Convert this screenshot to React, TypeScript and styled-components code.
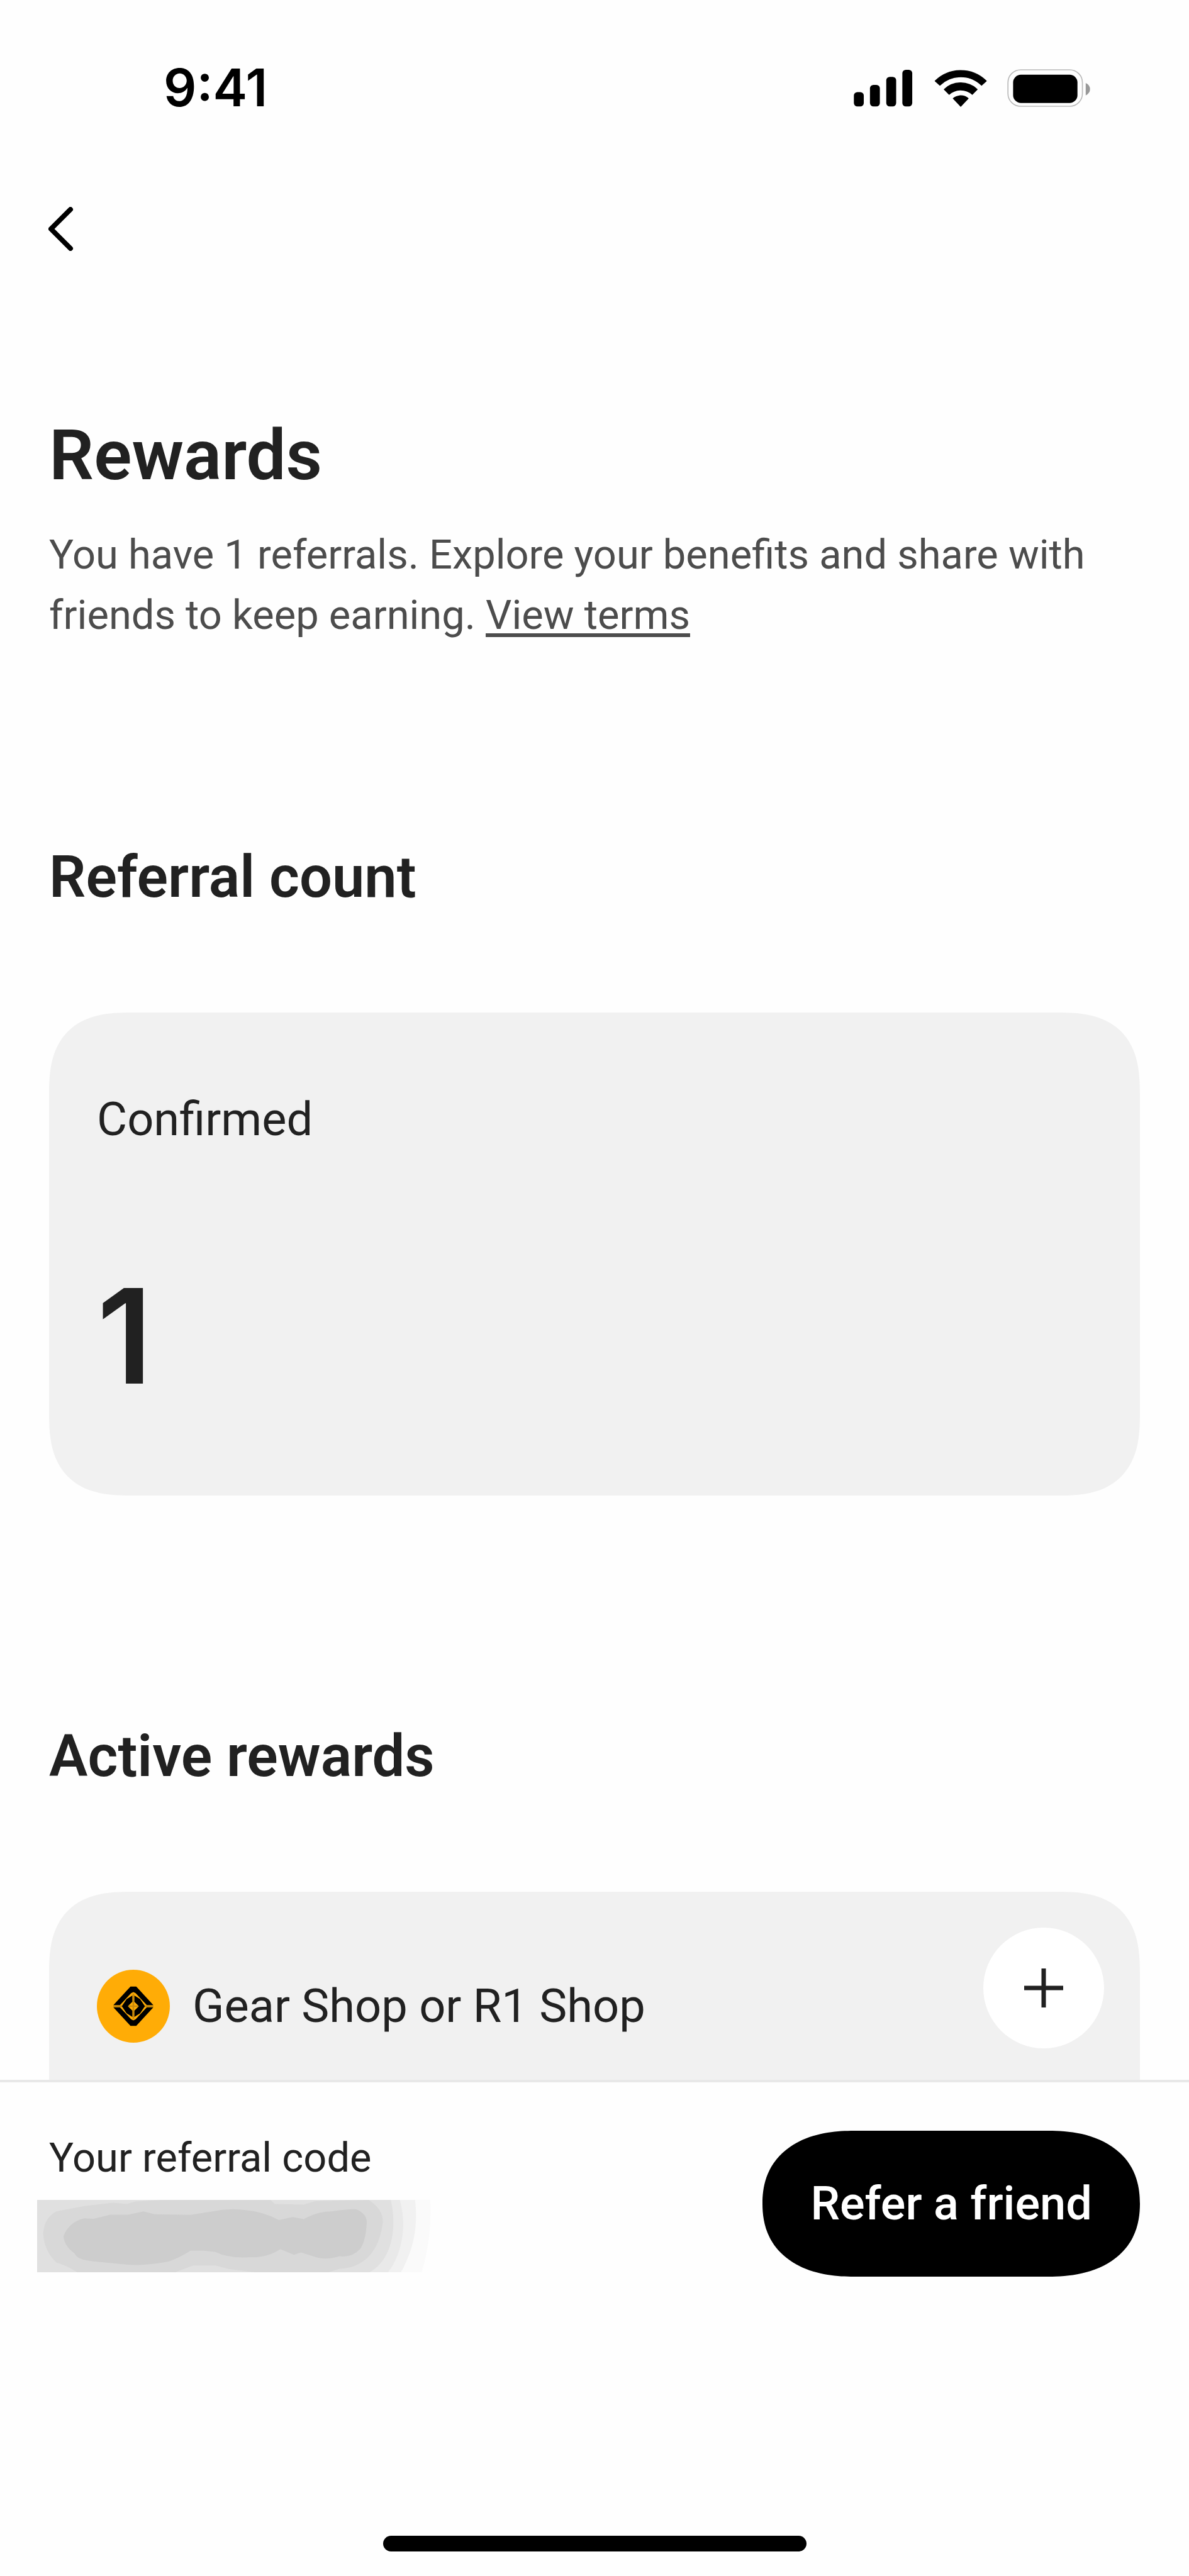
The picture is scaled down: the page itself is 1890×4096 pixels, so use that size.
import React from "react";
import styled, { createGlobalStyle } from "styled-components";

const color = {
  page: "#fefefe",
  card: "#f1f1f1",
  ink: "#212121",
  muted: "#4c4c4c",
  line: "#e8e8e8",
  brand: "#ffac06",
};

const GlobalStyle = createGlobalStyle`
  *, *::before, *::after { box-sizing: border-box; }
  body {
    margin: 0;
    background: ${color.page};
    color: ${color.ink};
    font-family: Roboto, "Liberation Sans", sans-serif;
  }
  h1, h2, p { margin: 0; }
  button { font: inherit; border: 0; padding: 0; cursor: pointer; }
  svg { display: block; flex: none; }
`;

const Screen = styled.div`
  display: flex;
  flex-direction: column;
  height: 100vh;
  overflow: hidden;
`;

const StatusBar = styled.header`
  flex: none;
  display: flex;
  align-items: center;
  justify-content: space-between;
  height: 280px;
  padding: 0 157px 0 260px;
  color: #000;
`;

const Clock = styled.time`
  font-family: Inter, sans-serif;
  font-size: 82px;
  font-weight: 600;
  line-height: 100px;
`;

const NavBar = styled.nav`
  flex: none;
  display: flex;
  align-items: center;
  height: 168px;
  padding: 0 77px;
`;

const BackButton = styled.button`
  background: none;
`;

const Content = styled.main`
  flex: 1 1 0;
  min-height: 0;
  overflow: hidden;
  padding: 216px 78px 0;
`;

const PageTitle = styled.h1`
  font-size: 112px;
  font-weight: 600;
  line-height: 120px;
`;

const Intro = styled.p`
  margin-top: 50px;
  color: ${color.muted};
  font-size: 65px;
  line-height: 96px;
`;

const TermsLink = styled.a`
  color: inherit;
  text-decoration: underline;
  text-decoration-thickness: 6px;
  text-underline-offset: 7px;
  text-decoration-skip-ink: none;
`;

const Section = styled.section<{ $space: number }>`
  margin-top: ${(p) => p.$space}px;
`;

const SectionTitle = styled.h2`
  margin-bottom: 160px;
  font-size: 92px;
  font-weight: 600;
  line-height: 110px;
`;

const Card = styled.div`
  background: ${color.card};
  border-radius: 100px;
  @supports (corner-shape: squircle) {
    border-radius: 130px;
    corner-shape: superellipse(1.4);
  }
`;

const CountCard = styled(Card)`
  display: flex;
  flex-direction: column;
  gap: 172px;
  padding: 126px 76px;
`;

const RewardCard = styled(Card)`
  display: flex;
  align-items: flex-start;
  justify-content: space-between;
  min-height: 780px;
  padding: 57px 57px 57px 76px;
`;

const RewardHead = styled.div`
  display: flex;
  align-items: center;
  gap: 36px;
  padding-top: 67px;
`;

const Label = styled.p`
  font-size: 74px;
  line-height: 88px;
`;

const Count = styled.p`
  font-family: Inter, sans-serif;
  font-size: 209px;
  font-weight: 600;
  line-height: 256px;
`;

const ExpandButton = styled.button`
  display: grid;
  place-items: center;
  flex: none;
  width: 192px;
  height: 192px;
  border-radius: 50%;
  background: #fff;
`;

const BottomBar = styled.footer`
  flex: none;
  border-top: 4px solid ${color.line};
  padding: 77px 78px 39px;
  background: ${color.page};
`;

const ReferRow = styled.div`
  display: flex;
  align-items: flex-start;
  justify-content: space-between;
`;

const CodeBlock = styled.div`
  display: flex;
  flex-direction: column;
  gap: 24px;
`;

const CodeLabel = styled.p`
  font-size: 65px;
  line-height: 86px;
`;

const HiddenCode = styled.svg`
  margin-left: -19px;
`;

const ReferButton = styled.button`
  height: 232px;
  padding: 0 76px;
  border-radius: 130px / 116px;
  background: #000;
  color: #fff;
  font-size: 74px;
  font-weight: 500;
  line-height: 88px;
  @supports (corner-shape: squircle) {
    border-radius: 145px / 116px;
    corner-shape: superellipse(1.2);
  }
`;

const HomeIndicator = styled.div`
  width: 673px;
  height: 25px;
  margin: 412px auto 0;
  border-radius: 13px;
  background: #000;
`;

function StatusIcons() {
  return (
    <svg width="376" height="60" viewBox="57 63 1145 183" role="img" aria-label="Signal, Wi-Fi and battery">
      <rect x="57" y="174" width="48" height="70" rx="17" />
      <rect x="135" y="139" width="48" height="105" rx="17" />
      <rect x="214" y="100" width="48" height="144" rx="17" />
      <rect x="292" y="66" width="48" height="178" rx="17" />
      <g stroke="#000" strokeWidth="4" strokeLinejoin="round">
        <path d="M451 120A177 177 0 0 1 699 120L676 141A145 145 0 0 0 474 141Z" />
        <path d="M495 161A117 117 0 0 1 655 161L631 185A84 84 0 0 0 519 185Z" />
        <path d="M539 205A56 56 0 0 1 611 205L575 243Z" />
      </g>
      <rect x="804" y="66" width="361" height="177" rx="62" fill="none" stroke="#b9b9b9" strokeWidth="5" />
      <rect x="829" y="90" width="312" height="137" rx="38" />
      <path d="M1181 130Q1202 140 1202 160Q1202 180 1181 190Z" fill="#999" />
    </svg>
  );
}

function BrandBadge() {
  return (
    <svg width="116" height="116" viewBox="48 69 354 354" aria-hidden="true">
      <circle cx="225" cy="246" r="177" fill={color.brand} />
      <path d="M128 246H322M225 185V308" stroke="#c98a0c" strokeWidth="8" />
      <path d="M128 241L211 151H239L322 241H290L236 183L225 177L214 183L160 241Z" />
      <path d="M128 251L211 341H239L322 251H290L236 309L225 315L214 309L160 251Z" />
      <path d="M169 246L192 212L220 194V225L198 246L220 267V298L192 280Z" />
      <path d="M281 246L258 212L230 194V225L252 246L230 267V298L258 280Z" />
    </svg>
  );
}

function RedactedCode() {
  return (
    <HiddenCode width="628" height="115" viewBox="45 102 1430 353" preserveAspectRatio="none" role="img" aria-label="Referral code hidden">
      <path fill="#fafafa" d="M45 102H1468Q1475 280 1437 455H45Z" />
      <path fill="#f1f1f1" d="M45 102H1413C1425 240 1405 350 1362 455H45Z" />
      <path fill="#e9e9e9" d="M45 102H1358C1385 230 1365 370 1315 455H45Z" />
      <path fill="#e0e0e0" d="M45 102H1325C1350 250 1325 400 1248 455H45Z" />
      <path fill="#d8d8d8" d="M400 110L500 102H890L905 122L1010 125L1050 108L1245 102Q1300 150 1296 215Q1285 330 1240 385Q1200 435 1140 438L1100 455H830L740 440L690 422L610 422L545 455H190Q150 420 115 408Q70 350 67 265Q70 190 115 158L215 132L320 116L370 122Z" />
      <path fill="#cdcdcd" d="M215 192L250 194L310 174H375L430 158L470 172L600 175L680 158Q740 140 800 152Q860 158 920 200L970 186L1010 196Q1060 158 1110 158Q1180 144 1200 148Q1240 170 1238 215Q1235 300 1215 340Q1185 385 1140 377Q1090 398 1050 380L1000 358L975 370L925 342Q880 385 810 382Q740 388 690 356L650 350L600 350Q560 385 520 403Q420 428 350 415L250 402Q190 395 180 362Q145 330 140 280Q160 210 215 192Z" />
    </HiddenCode>
  );
}

export default function App() {
  return (
    <Screen>
      <GlobalStyle />
      <StatusBar>
        <Clock>9:41</Clock>
        <StatusIcons />
      </StatusBar>
      <NavBar>
        <BackButton type="button" aria-label="Back">
          <svg width="40" height="70" viewBox="0 0 40 70" fill="none" stroke="#000" strokeWidth="8" strokeLinecap="round" strokeLinejoin="round">
            <path d="M35 4L4 35L35 66" />
          </svg>
        </BackButton>
      </NavBar>
      <Content>
        <PageTitle>Rewards</PageTitle>
        <Intro>
          You have 1 referrals. Explore your benefits and share with friends to keep earning.{" "}
          <TermsLink href="#terms">View terms</TermsLink>
        </Intro>
        <Section $space={314}>
          <SectionTitle>Referral count</SectionTitle>
          <CountCard>
            <Label>Confirmed</Label>
            <Count>1</Count>
          </CountCard>
        </Section>
        <Section $space={360}>
          <SectionTitle>Active rewards</SectionTitle>
          <RewardCard>
            <RewardHead>
              <BrandBadge />
              <Label>Gear Shop or R1 Shop</Label>
            </RewardHead>
            <ExpandButton type="button" aria-label="Show reward details">
              <svg width="62" height="62" viewBox="0 0 62 62" stroke={color.ink} strokeWidth="7">
                <path d="M31 0V62M0 31H62" />
              </svg>
            </ExpandButton>
          </RewardCard>
        </Section>
      </Content>
      <BottomBar>
        <ReferRow>
          <CodeBlock>
            <CodeLabel>Your referral code</CodeLabel>
            <RedactedCode />
          </CodeBlock>
          <ReferButton type="button">Refer a friend</ReferButton>
        </ReferRow>
        <HomeIndicator />
      </BottomBar>
    </Screen>
  );
}
